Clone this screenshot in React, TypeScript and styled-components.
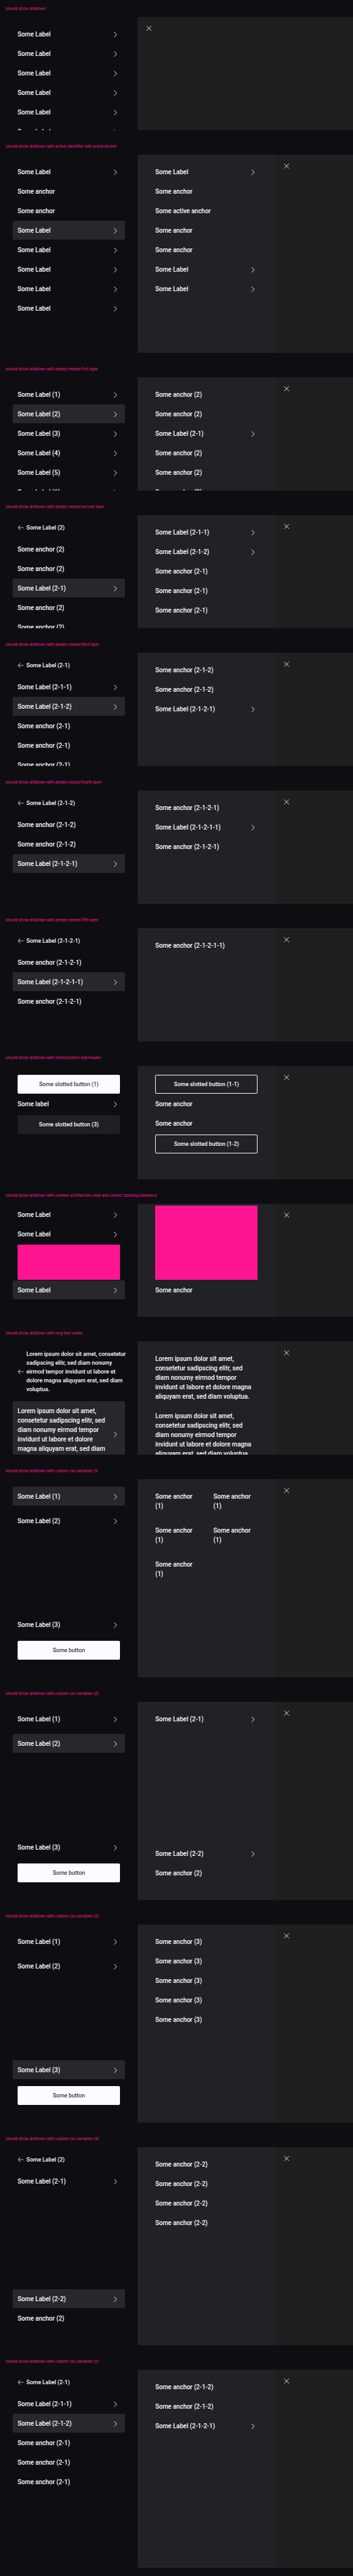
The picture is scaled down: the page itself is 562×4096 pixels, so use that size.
import React from 'react';
import styled, { createGlobalStyle, css } from 'styled-components';

const color = {
  canvas: '#0e0e12',
  surface: '#212225',
  backdrop: '#1f1f20',
  active: '#28272c',
  frosted: '#201f24',
  primary: '#fbfcff',
  accent: '#ff1493',
};

const GlobalStyle = createGlobalStyle`
  *, *::before, *::after { box-sizing: border-box; }
  body {
    margin: 0;
    background: ${color.canvas};
    color: ${color.primary};
    font-family: 'Roboto', sans-serif;
  }
`;

const Page = styled.main`
  display: flex;
  flex-direction: column;
`;

const Example = styled.section`
  padding-bottom: 12px;
`;

const Title = styled.h2`
  margin: 0;
  padding: 0 9px;
  font-family: 'Inter', 'Roboto', sans-serif;
  font-size: 6px;
  font-weight: 400;
  line-height: 27px;
  color: ${color.accent};
`;

const Stage = styled.div<{ $tall?: boolean }>`
  display: flex;
  height: ${(p) => (p.$tall ? 315 : 180)}px;
  overflow: hidden;
`;

const Level = styled.nav<{ $nested?: boolean }>`
  flex: 0 0 39%;
  display: flex;
  flex-direction: column;
  overflow: hidden;
  background: ${(p) => (p.$nested ? color.surface : 'transparent')};
`;

const Backdrop = styled.div`
  flex: 1;
  padding: 9px;
  background: ${color.backdrop};
`;

type ListLayout = 'default' | 'scrolled' | 'afterBack' | 'spaced' | 'columns';

const List = styled.div<{ $layout: ListLayout }>`
  flex: 1 0 auto;
  display: flex;
  flex-direction: column;
  gap: 1px;
  padding: 12px 20px 28px;

  ${(p) => p.$layout === 'scrolled' && css`padding-top: 2px;`}
  ${(p) => p.$layout === 'afterBack' && css`padding-top: 0;`}
  ${(p) => p.$layout === 'spaced' && css`gap: 9px;`}
  ${(p) => p.$layout === 'columns' && css`
    display: grid;
    grid-template-columns: 1fr 1fr;
    align-content: start;
    gap: 9px 6px;
  `}
`;

const itemStyle = css<{ $pushed?: boolean }>`
  flex: none;
  display: flex;
  align-items: center;
  justify-content: space-between;
  gap: 4px;
  margin: 0;
  margin-top: ${(p) => (p.$pushed ? 'auto' : '0')};
  padding: 8px 8px 7px;
  border: 0;
  border-radius: 2px;
  font: inherit;
  font-size: 10px;
  font-weight: 500;
  line-height: 15px;
  text-align: left;
  text-decoration: none;
  color: inherit;
  cursor: pointer;
`;

const DrillButton = styled.button<{ $active?: boolean; $pushed?: boolean }>`
  ${itemStyle}
  background: ${(p) => (p.$active ? color.active : 'transparent')};
`;

const Anchor = styled.a<{ $pushed?: boolean }>`
  ${itemStyle}
`;

const BackButton = styled.button`
  flex: none;
  display: flex;
  align-items: center;
  gap: 4px;
  margin: 0;
  padding: 13px 16px 12px 28px;
  border: 0;
  background: transparent;
  font: inherit;
  font-size: 9px;
  font-weight: 500;
  line-height: 14px;
  text-align: left;
  color: inherit;
  cursor: pointer;
`;

const CloseButton = styled.button`
  display: flex;
  padding: 2px;
  border: 0;
  background: transparent;
  color: inherit;
  cursor: pointer;
`;

type Look = 'solid' | 'frosted' | 'outline';

const SlottedButton = styled.button<{ $look: Look }>`
  flex: none;
  margin: 2px 8px 0;
  height: 30px;
  padding: 0 8px;
  border: 1px solid ${(p) => (p.$look === 'frosted' ? color.frosted : color.primary)};
  border-radius: 2px;
  font: inherit;
  font-size: 9px;
  font-weight: ${(p) => (p.$look === 'solid' ? 400 : 500)};
  line-height: 14px;
  background: ${(p) =>
    p.$look === 'solid' ? color.primary : p.$look === 'frosted' ? color.frosted : 'transparent'};
  color: ${(p) => (p.$look === 'solid' ? '#010205' : color.primary)};
  cursor: pointer;
`;

const Block = styled.div<{ $large?: boolean }>`
  flex: none;
  height: ${(p) => (p.$large ? 118 : 56)}px;
  margin: 1px 8px 0;
  background: ${color.accent};
`;

const Icon = styled.svg`
  flex: none;
  display: block;
  fill: none;
  stroke: currentColor;
`;

const Chevron = () => (
  <Icon width="14" height="14" viewBox="0 0 24 24" strokeWidth="1.6" aria-hidden="true">
    <path d="M8 5l7 7-7 7" />
  </Icon>
);

const ArrowLeft = () => (
  <Icon width="10" height="10" viewBox="0 0 10 10" strokeWidth="0.9" aria-hidden="true">
    <path d="M4 1.5L1 5l3 3.5" />
    <path d="M1 5h8.7" strokeWidth="0.7" />
  </Icon>
);

const Cross = () => (
  <Icon width="14" height="14" viewBox="0 0 14 14" strokeWidth="0.9" aria-hidden="true">
    <path d="M3.6 3.4l7.4 7.4M11 3.4L3.6 10.8" />
  </Icon>
);

type Entry =
  | { kind: 'label'; text: string; active?: boolean; pushed?: boolean }
  | { kind: 'anchor'; text: string; pushed?: boolean }
  | { kind: 'button'; text: string; look: Look }
  | { kind: 'block'; large?: boolean };

interface LevelData {
  back?: string;
  layout?: ListLayout;
  entries: Entry[];
}

interface ExampleData {
  title: string;
  tall?: boolean;
  first: LevelData;
  second?: LevelData;
}

const label = (text: string, active = false, pushed = false): Entry => ({ kind: 'label', text, active, pushed });
const anchor = (text: string): Entry => ({ kind: 'anchor', text });
const button = (text: string, look: Look = 'solid'): Entry => ({ kind: 'button', text, look });
const repeat = (entry: Entry, count: number): Entry[] => Array.from({ length: count }, () => entry);

const lorem =
  'Lorem ipsum dolor sit amet, consetetur sadipscing elitr, sed diam nonumy eirmod tempor invidunt ut labore et dolore magna aliquyam erat, sed diam voluptua.';

const examples: ExampleData[] = [
  {
    title: 'should show drilldown',
    first: { entries: repeat(label('Some Label'), 6) },
  },
  {
    title: 'should show drilldown with active-identifier with active anchor',
    tall: true,
    first: {
      entries: [
        label('Some Label'),
        ...repeat(anchor('Some anchor'), 2),
        label('Some Label', true),
        ...repeat(label('Some Label'), 4),
      ],
    },
    second: {
      entries: [
        label('Some Label'),
        anchor('Some anchor'),
        anchor('Some active anchor'),
        ...repeat(anchor('Some anchor'), 2),
        ...repeat(label('Some Label'), 2),
      ],
    },
  },
  {
    title: 'should show drilldown with deeply nested first layer',
    first: {
      entries: [
        label('Some Label (1)'),
        label('Some Label (2)', true),
        label('Some Label (3)'),
        label('Some Label (4)'),
        label('Some Label (5)'),
        label('Some Label (6)'),
      ],
    },
    second: {
      entries: [
        ...repeat(anchor('Some anchor (2)'), 2),
        label('Some Label (2-1)'),
        ...repeat(anchor('Some anchor (2)'), 3),
      ],
    },
  },
  {
    title: 'should show drilldown with deeply nested second layer',
    first: {
      back: 'Some Label (2)',
      entries: [
        ...repeat(anchor('Some anchor (2)'), 2),
        label('Some Label (2-1)', true),
        ...repeat(anchor('Some anchor (2)'), 2),
      ],
    },
    second: {
      entries: [
        label('Some Label (2-1-1)'),
        label('Some Label (2-1-2)'),
        ...repeat(anchor('Some anchor (2-1)'), 3),
      ],
    },
  },
  {
    title: 'should show drilldown with deeply nested third layer',
    first: {
      back: 'Some Label (2-1)',
      entries: [
        label('Some Label (2-1-1)'),
        label('Some Label (2-1-2)', true),
        ...repeat(anchor('Some anchor (2-1)'), 3),
      ],
    },
    second: {
      entries: [...repeat(anchor('Some anchor (2-1-2)'), 2), label('Some Label (2-1-2-1)')],
    },
  },
  {
    title: 'should show drilldown with deeply nested fourth layer',
    first: {
      back: 'Some Label (2-1-2)',
      entries: [...repeat(anchor('Some anchor (2-1-2)'), 2), label('Some Label (2-1-2-1)', true)],
    },
    second: {
      entries: [
        anchor('Some anchor (2-1-2-1)'),
        label('Some Label (2-1-2-1-1)'),
        anchor('Some anchor (2-1-2-1)'),
      ],
    },
  },
  {
    title: 'should show drilldown with deeply nested fifth layer',
    first: {
      back: 'Some Label (2-1-2-1)',
      entries: [
        anchor('Some anchor (2-1-2-1)'),
        label('Some Label (2-1-2-1-1)', true),
        anchor('Some anchor (2-1-2-1)'),
      ],
    },
    second: { entries: [anchor('Some anchor (2-1-2-1-1)')] },
  },
  {
    title: 'should show drilldown with slotted button and header',
    first: {
      entries: [
        button('Some slotted button (1)'),
        label('Some label'),
        button('Some slotted button (3)', 'frosted'),
      ],
    },
    second: {
      entries: [
        button('Some slotted button (1-1)', 'outline'),
        ...repeat(anchor('Some anchor'), 2),
        button('Some slotted button (1-2)', 'outline'),
      ],
    },
  },
  {
    title: 'should show drilldown with content scrolled into view and correct stacking behaviour',
    first: {
      layout: 'scrolled',
      entries: [...repeat(label('Some Label'), 2), { kind: 'block' }, label('Some Label', true)],
    },
    second: {
      layout: 'scrolled',
      entries: [{ kind: 'block', large: true }, anchor('Some anchor')],
    },
  },
  {
    title: 'should show drilldown with long text nodes',
    first: { back: lorem, entries: [label(lorem, true)] },
    second: { entries: repeat(anchor(lorem), 2) },
  },
  {
    title: 'should show drilldown with custom css variables (1)',
    tall: true,
    first: {
      layout: 'spaced',
      entries: [
        label('Some Label (1)', true),
        label('Some Label (2)'),
        label('Some Label (3)', false, true),
        button('Some button'),
      ],
    },
    second: { layout: 'columns', entries: repeat(anchor('Some anchor (1)'), 5) },
  },
  {
    title: 'should show drilldown with custom css variables (2)',
    tall: true,
    first: {
      layout: 'spaced',
      entries: [
        label('Some Label (1)'),
        label('Some Label (2)', true),
        label('Some Label (3)', false, true),
        button('Some button'),
      ],
    },
    second: {
      entries: [label('Some Label (2-1)'), label('Some Label (2-2)', false, true), anchor('Some anchor (2)')],
    },
  },
  {
    title: 'should show drilldown with custom css variables (3)',
    tall: true,
    first: {
      layout: 'spaced',
      entries: [
        label('Some Label (1)'),
        label('Some Label (2)'),
        label('Some Label (3)', true, true),
        button('Some button'),
      ],
    },
    second: { entries: repeat(anchor('Some anchor (3)'), 5) },
  },
  {
    title: 'should show drilldown with custom css variables (4)',
    tall: true,
    first: {
      back: 'Some Label (2)',
      entries: [label('Some Label (2-1)'), label('Some Label (2-2)', true, true), anchor('Some anchor (2)')],
    },
    second: { entries: repeat(anchor('Some anchor (2-2)'), 4) },
  },
  {
    title: 'should show drilldown with custom css variables (5)',
    tall: true,
    first: {
      back: 'Some Label (2-1)',
      entries: [
        label('Some Label (2-1-1)'),
        label('Some Label (2-1-2)', true),
        ...repeat(anchor('Some anchor (2-1)'), 3),
      ],
    },
    second: {
      entries: [...repeat(anchor('Some anchor (2-1-2)'), 2), label('Some Label (2-1-2-1)')],
    },
  },
];

function EntryView({ entry }: { entry: Entry }) {
  switch (entry.kind) {
    case 'label':
      return (
        <DrillButton type="button" $active={entry.active} $pushed={entry.pushed} aria-expanded={!!entry.active}>
          {entry.text}
          <Chevron />
        </DrillButton>
      );
    case 'anchor':
      return <Anchor href="#" $pushed={entry.pushed}>{entry.text}</Anchor>;
    case 'button':
      return <SlottedButton type="button" $look={entry.look}>{entry.text}</SlottedButton>;
    case 'block':
      return <Block $large={entry.large} />;
  }
}

function LevelView({ level, nested }: { level: LevelData; nested?: boolean }) {
  const layout = level.layout ?? (level.back ? 'afterBack' : 'default');
  return (
    <Level $nested={nested}>
      {level.back && (
        <BackButton type="button">
          <ArrowLeft />
          {level.back}
        </BackButton>
      )}
      <List $layout={layout}>
        {level.entries.map((entry, i) => (
          <EntryView key={i} entry={entry} />
        ))}
      </List>
    </Level>
  );
}

export default function App() {
  return (
    <>
      <GlobalStyle />
      <Page>
        {examples.map((example) => (
          <Example key={example.title}>
            <Title>{example.title}</Title>
            <Stage $tall={example.tall}>
              <LevelView level={example.first} />
              {example.second && <LevelView level={example.second} nested />}
              <Backdrop>
                <CloseButton type="button" aria-label="Close">
                  <Cross />
                </CloseButton>
              </Backdrop>
            </Stage>
          </Example>
        ))}
      </Page>
    </>
  );
}
